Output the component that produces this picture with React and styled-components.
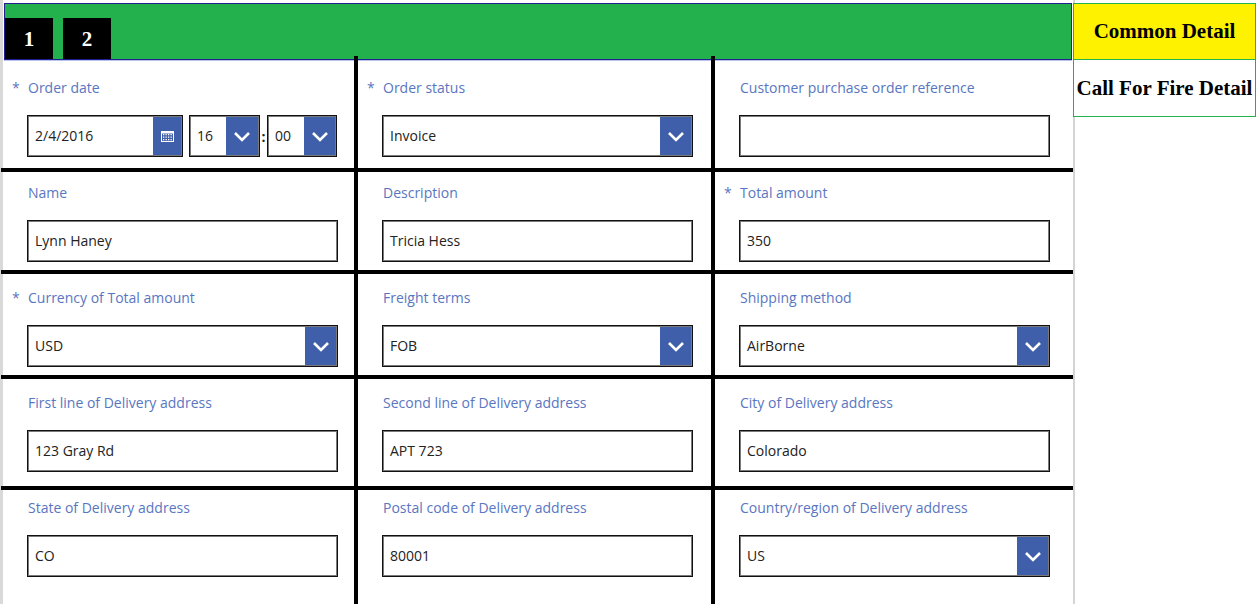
import React from "react";
import styled, { createGlobalStyle } from "styled-components";

const Global = createGlobalStyle`
  html, body { margin: 0; padding: 0; background: #fff; overflow: hidden; }
  * { box-sizing: border-box; }
`;

const Page = styled.div`
  display: flex;
  width: 1260px;
  height: 604px;
`;

const FormPanel = styled.div`
  width: 1075px;
  height: 604px;
  border-left: 3px solid #d9d9d9;
  border-right: 2px solid #d4d4d4;
  display: flex;
  flex-direction: column;
`;

const Header = styled.div`
  margin: 3px 1px 0 1px;
  height: 57px;
  background: #22b14c;
  border: 1px solid #1f1f8f;
  box-shadow: 0 1px 0 #b9c2ea;
  display: flex;
  align-items: flex-end;
  gap: 10px;
`;

const Tab = styled.div`
  width: 48px;
  height: 41px;
  background: #000;
  color: #fff;
  font-family: "Liberation Serif", "Times New Roman", serif;
  font-weight: bold;
  font-size: 21px;
  display: flex;
  align-items: center;
  justify-content: center;
  padding-top: 1px;
`;

const Grid = styled.div`
  flex: 1;
  display: grid;
  grid-template-columns: 351px 4px 353px 4px 1fr;
  grid-template-rows: 108px 4px 98px 4px 101px 4px 107px 4px 1fr;
`;

const VLine = styled.div`
  grid-column: ${(p) => p.$col};
  grid-row: 1 / -1;
  background: #000;
  margin-top: -4px;
`;

const HLine = styled.div`
  grid-column: 1 / -1;
  grid-row: ${(p) => p.$row};
  background: #000;
  margin-left: -2px;
`;

const Cell = styled.div`
  grid-column: ${(p) => p.$col};
  grid-row: ${(p) => p.$row};
  padding: ${(p) => p.$top}px 0 0 24px;
  display: flex;
  flex-direction: column;
`;

const Label = styled.div`
  font-family: "Open Sans", "Noto Sans", sans-serif;
  font-size: 14px;
  line-height: 20px;
  height: 20px;
  color: #5976c1;
  margin: 1px 0 17px 1px;
  white-space: nowrap;
`;

const Star = styled.span`
  display: inline-block;
  width: 16px;
  margin-left: -16px;
  color: #5976c1;
`;

const Box = styled.div`
  width: ${(p) => p.$w || 311}px;
  height: 42px;
  border: 1px solid #111;
  box-shadow: inset 0 0 0 1px #7a7a7a;
  display: flex;
  align-items: stretch;
  background: #fff;
`;

const Value = styled.div`
  flex: 1;
  display: flex;
  align-items: center;
  padding: 0 0 2px 7px;
  font-family: "Open Sans", "Noto Sans", sans-serif;
  font-size: 14px;
  color: #222;
  white-space: nowrap;
  overflow: hidden;
`;

const Button = styled.div`
  width: ${(p) => p.$w || 31}px;
  background: #3f5fab;
  margin: 1px 1px 1px 0;
  display: flex;
  align-items: center;
  justify-content: center;
`;

const DateRow = styled.div`
  display: flex;
  align-items: center;
`;

const Colon = styled.span`
  width: 7px;
  text-align: center;
  font-family: "Open Sans", sans-serif;
  font-weight: bold;
  font-size: 14px;
  color: #222;
`;

const Side = styled.div`
  width: 183px;
  margin-left: -2px;
  padding-top: 3px;
  position: relative;
  z-index: 1;
  display: flex;
  flex-direction: column;
`;

const SideItem = styled.div`
  height: 57px;
  background: ${(p) => (p.$active ? "#fff200" : "#fff")};
  border: 1px solid #22b14c;
  border-top-width: ${(p) => (p.$first ? 1 : 0)}px;
  display: flex;
  align-items: center;
  justify-content: center;
  font-family: "Liberation Serif", "Times New Roman", serif;
  font-weight: bold;
  font-size: 21px;
  color: #000;
  white-space: nowrap;
`;

const Chevron = () => (
  <svg width="18" height="11" viewBox="0 0 18 11">
    <polyline points="2,2 9,9 16,2" fill="none" stroke="#fff" strokeWidth="2.6" />
  </svg>
);

const CalendarIcon = () => (
  <svg width="13" height="11" viewBox="0 0 13 11">
    <rect x="0.5" y="0.5" width="12" height="10" fill="none" stroke="#fff" strokeWidth="1" />
    <rect x="0.5" y="0.5" width="12" height="2" fill="#fff" />
    {[3, 5.5, 8].map((y) =>
      [2.5, 5, 7.5, 10].map((x) => (
        <rect key={`${x}-${y}`} x={x - 0.5} y={y} width="1.3" height="1.3" fill="#fff" />
      ))
    )}
  </svg>
);

const rows = [
  {
    row: 1,
    top: 17,
    cells: [
      { label: "Order date", req: true, type: "datetime" },
      { label: "Order status", req: true, type: "select", value: "Invoice" },
      { label: "Customer purchase order reference", type: "text", value: "" },
    ],
  },
  {
    row: 3,
    top: 10,
    cells: [
      { label: "Name", type: "text", value: "Lynn Haney" },
      { label: "Description", type: "text", value: "Tricia Hess" },
      { label: "Total amount", req: true, type: "text", value: "350" },
    ],
  },
  {
    row: 5,
    top: 13,
    cells: [
      { label: "Currency of Total amount", req: true, type: "select", value: "USD" },
      { label: "Freight terms", type: "select", value: "FOB" },
      { label: "Shipping method", type: "select", value: "AirBorne" },
    ],
  },
  {
    row: 7,
    top: 13,
    cells: [
      { label: "First line of Delivery address", type: "text", value: "123 Gray Rd" },
      { label: "Second line of Delivery address", type: "text", value: "APT 723" },
      { label: "City of Delivery address", type: "text", value: "Colorado" },
    ],
  },
  {
    row: 9,
    top: 7,
    cells: [
      { label: "State of Delivery address", type: "text", value: "CO" },
      { label: "Postal code of Delivery address", type: "text", value: "80001" },
      { label: "Country/region of Delivery address", type: "select", value: "US" },
    ],
  },
];

const Control = ({ cell }) => {
  if (cell.type === "datetime") {
    return (
      <DateRow>
        <Box $w={156}>
          <Value>2/4/2016</Value>
          <Button $w={28}>
            <CalendarIcon />
          </Button>
        </Box>
        <span style={{ width: 6 }} />
        <Box $w={71}>
          <Value>16</Value>
          <Button $w={32}>
            <Chevron />
          </Button>
        </Box>
        <Colon>:</Colon>
        <Box $w={70}>
          <Value>00</Value>
          <Button $w={31}>
            <Chevron />
          </Button>
        </Box>
      </DateRow>
    );
  }
  return (
    <Box>
      <Value>{cell.value}</Value>
      {cell.type === "select" && (
        <Button>
          <Chevron />
        </Button>
      )}
    </Box>
  );
};

export default function App() {
  return (
    <>
      <Global />
      <Page>
        <FormPanel>
          <Header>
            <Tab>1</Tab>
            <Tab>2</Tab>
          </Header>
          <Grid>
            {rows.map((r) =>
              r.cells.map((c, i) => (
                <Cell key={`${r.row}-${i}`} $row={r.row} $col={i * 2 + 1} $top={r.top}>
                  <Label>
                    {c.req && <Star>*</Star>}
                    {c.label}
                  </Label>
                  <Control cell={c} />
                </Cell>
              ))
            )}
            {[2, 4, 6, 8].map((r) => (
              <HLine key={r} $row={r} />
            ))}
            <VLine $col={2} />
            <VLine $col={4} />
          </Grid>
        </FormPanel>
        <Side>
          <SideItem $active $first>
            Common Detail
          </SideItem>
          <SideItem>Call For Fire Detail</SideItem>
        </Side>
      </Page>
    </>
  );
}
